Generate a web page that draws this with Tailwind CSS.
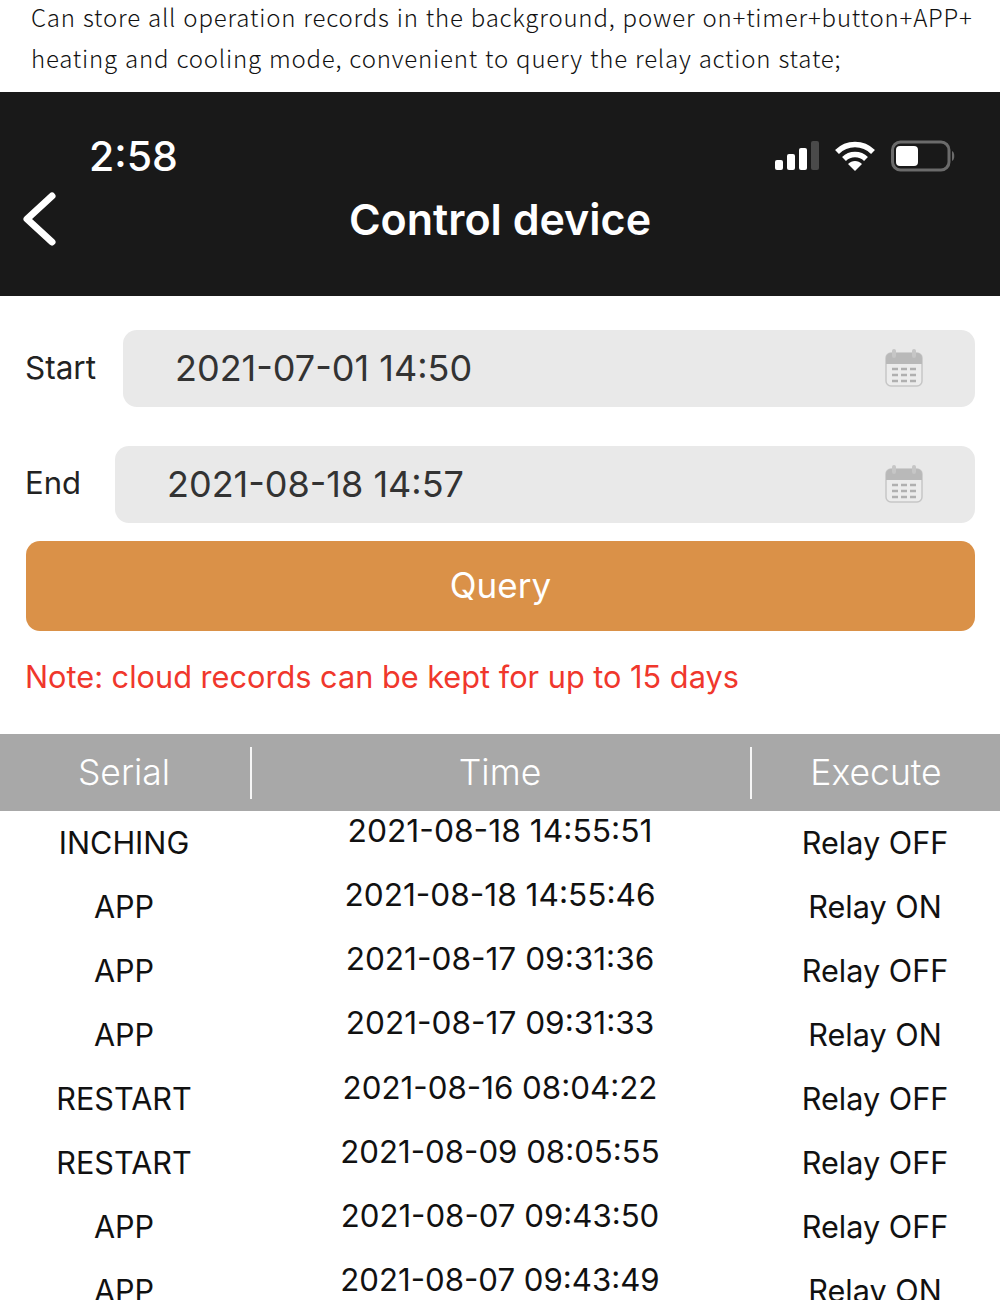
<!DOCTYPE html>
<html lang="en">
<head>
  <meta charset="UTF-8" />
  <title>Control device</title>
  <script src="https://cdn.jsdelivr.net/npm/@tailwindcss/browser@4"></script>
</head>
<body class="bg-white">
  <div class="w-[1000px] h-[1300px] overflow-hidden font-['Inter',sans-serif]">

    <div class="h-[92px] pl-[31px] flex flex-col font-['Noto_Sans_CJK_JP',sans-serif] font-light text-[24px] leading-[41px] text-[#111] whitespace-nowrap tracking-[0.8px] [word-spacing:1px]">
      <p class="-mt-[4px]">Can store all operation records in the background, power on+timer+button+APP+</p>
      <p>heating and cooling mode, convenient to query the relay action state;</p>
    </div>

    <header class="h-[204px] bg-[#191919] text-white flex flex-col">
      <div class="h-[64px] mt-[32px] pl-[89px] pr-[44px] flex items-center justify-between">
        <span class="text-[41px] font-medium leading-none">2:58</span>
        <div class="flex items-center gap-[15px]">
          <svg width="45" height="32" viewBox="0 0 45 32">
            <rect x="1" y="20" width="8" height="10" rx="2" fill="#fff"/>
            <rect x="13" y="14" width="8" height="16" rx="2" fill="#fff"/>
            <rect x="25" y="8" width="8" height="22" rx="2" fill="#fff"/>
            <rect x="37" y="1" width="8" height="29" rx="2" fill="#4a4a4a"/>
          </svg>
          <svg width="42" height="32" viewBox="0 0 42 32" fill="none" stroke="#fff" stroke-width="5.5">
            <path d="M3 12 C13 2 29 2 39 12"/>
            <path d="M10 19 C16 13 26 13 32 19"/>
            <path d="M14 24 L21 31 L28 24 C24 20 18 20 14 24Z" fill="#fff" stroke="none"/>
          </svg>
          <svg width="65" height="32" viewBox="0 0 65 32">
            <rect x="1.5" y="2" width="56.5" height="28" rx="8" fill="none" stroke="#6b6b6b" stroke-width="3"/>
            <rect x="5" y="6" width="22" height="20" rx="4" fill="#fff"/>
            <path d="M61 11 C64 12 64 20 61 21Z" fill="#6b6b6b"/>
          </svg>
        </div>
      </div>
      <div class="relative h-[64px] pb-[2px] flex items-center justify-center">
        <svg class="absolute left-[22px] top-[3px]" width="36" height="58" viewBox="0 0 36 58" fill="none" stroke="#fff" stroke-width="7" stroke-linecap="round" stroke-linejoin="round">
          <path d="M30 5 L5 28 L30 51"/>
        </svg>
        <h1 class="text-[43px] font-semibold leading-none">Control device</h1>
      </div>
    </header>

    <section class="pl-[26px] pr-[25px] pt-[34px] text-[#222]">
      <div class="flex items-center justify-between">
        <span class="-ml-[1px] pb-[2px] text-[31.5px]">Start</span>
        <div class="w-[852px] h-[77px] rounded-[14px] bg-[#e9e9e9] pl-[52px] pr-[52px] pb-[2px] flex items-center justify-between">
          <span class="text-[36px] text-[#333]">2021-07-01 14:50</span>
          <svg width="38" height="38" viewBox="0 0 38 38">
            <rect x="1" y="4" width="36" height="33" rx="5" fill="#ececec" stroke="#c6c6c6" stroke-width="1.5"/>
            <path d="M1 15V9a5 5 0 0 1 5-5h26a5 5 0 0 1 5 5v6Z" fill="#b9b9b9"/>
            <rect x="7" y="0" width="4" height="9" rx="2" fill="#c6c6c6"/>
            <rect x="27" y="0" width="4" height="9" rx="2" fill="#c6c6c6"/>
            <path d="M7 20h6M16 20h6M25 20h6M7 26h6M16 26h6M25 26h6M7 32h6M16 32h6M25 32h6" stroke="#b0b0b0" stroke-width="2.5"/>
          </svg>
        </div>
      </div>
      <div class="flex items-center justify-between mt-[39px]">
        <span class="-ml-[1px] pb-[2px] text-[31px]">End</span>
        <div class="w-[860px] h-[77px] rounded-[14px] bg-[#e9e9e9] pl-[52px] pr-[52px] pb-[2px] flex items-center justify-between">
          <span class="text-[36px] text-[#333]">2021-08-18 14:57</span>
          <svg width="38" height="38" viewBox="0 0 38 38">
            <rect x="1" y="4" width="36" height="33" rx="5" fill="#ececec" stroke="#c6c6c6" stroke-width="1.5"/>
            <path d="M1 15V9a5 5 0 0 1 5-5h26a5 5 0 0 1 5 5v6Z" fill="#b9b9b9"/>
            <rect x="7" y="0" width="4" height="9" rx="2" fill="#c6c6c6"/>
            <rect x="27" y="0" width="4" height="9" rx="2" fill="#c6c6c6"/>
            <path d="M7 20h6M16 20h6M25 20h6M7 26h6M16 26h6M25 26h6M7 32h6M16 32h6M25 32h6" stroke="#b0b0b0" stroke-width="2.5"/>
          </svg>
        </div>
      </div>
      <button class="w-full h-[90px] mt-[18px] pb-[2px] rounded-[14px] bg-[#da9148] text-white text-[35px] flex items-center justify-center">Query</button>
      <p class="mt-[26px] -ml-[1px] h-[40px] leading-[40px] text-[30.7px] text-[#f0372c] whitespace-nowrap">Note: cloud records can be kept for up to 15 days</p>
    </section>

    <div class="mt-[37px] h-[77px] bg-[#a8a8a8] text-white text-[35.5px] font-light flex items-center">
      <div class="w-[250px] pr-[2px] text-center">Serial</div>
      <div class="w-[2px] h-[52px] bg-white/90"></div>
      <div class="w-[498px] pr-[2px] text-center">Time</div>
      <div class="w-[2px] h-[52px] bg-white/90"></div>
      <div class="flex-1 text-center">Execute</div>
    </div>

    <div class="text-[#111] text-[30.6px]">
      <div class="h-16 flex items-center"><div class="w-[250px] pr-[2px] text-center">INCHING</div><div class="w-[500px] text-center self-start text-[31.8px] leading-[40px]">2021-08-18 14:55:51</div><div class="flex-1 text-center">Relay OFF</div></div>
      <div class="h-16 flex items-center"><div class="w-[250px] pr-[2px] text-center">APP</div><div class="w-[500px] text-center self-start text-[31.6px] leading-[40px]">2021-08-18 14:55:46</div><div class="flex-1 text-center">Relay ON</div></div>
      <div class="h-16 flex items-center"><div class="w-[250px] pr-[2px] text-center">APP</div><div class="w-[500px] text-center self-start text-[31.6px] leading-[40px]">2021-08-17 09:31:36</div><div class="flex-1 text-center">Relay OFF</div></div>
      <div class="h-16 flex items-center"><div class="w-[250px] pr-[2px] text-center">APP</div><div class="w-[500px] text-center self-start text-[31.6px] leading-[40px]">2021-08-17 09:31:33</div><div class="flex-1 text-center">Relay ON</div></div>
      <div class="h-16 flex items-center"><div class="w-[250px] pr-[2px] text-center">RESTART</div><div class="w-[500px] text-center self-start text-[31.3px] leading-[42px]">2021-08-16 08:04:22</div><div class="flex-1 text-center">Relay OFF</div></div>
      <div class="h-16 flex items-center"><div class="w-[250px] pr-[2px] text-center">RESTART</div><div class="w-[500px] text-center self-start text-[31.2px] leading-[42px]">2021-08-09 08:05:55</div><div class="flex-1 text-center">Relay OFF</div></div>
      <div class="h-16 flex items-center"><div class="w-[250px] pr-[2px] text-center">APP</div><div class="w-[500px] text-center self-start text-[31.2px] leading-[42px]">2021-08-07 09:43:50</div><div class="flex-1 text-center">Relay OFF</div></div>
      <div class="h-16 flex items-center"><div class="w-[250px] pr-[2px] text-center">APP</div><div class="w-[500px] text-center self-start text-[31.2px] leading-[42px]">2021-08-07 09:43:49</div><div class="flex-1 text-center">Relay ON</div></div>
    </div>
  </div>
</body>
</html>
